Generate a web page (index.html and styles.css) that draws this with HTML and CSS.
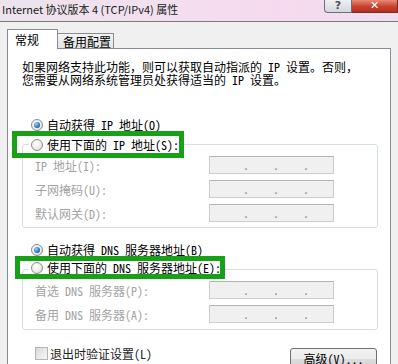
FILE: index.html
```html
<!DOCTYPE html>
<html lang="zh-CN">
<head>
<meta charset="utf-8">
<title>Internet 协议版本 4 (TCP/IPv4) 属性</title>
<link rel="stylesheet" href="styles.css">
</head>
<body>
<div class="titlebar">
  <span class="title">Internet 协议版本 4 (TCP/IPv4) 属性</span>
  <div class="caption">
    <span class="cap cap-help">?</span>
    <span class="cap cap-close">✕</span>
  </div>
</div>
<div class="window">
  <div class="tabs">
    <div class="tab tab-active">常规</div>
    <div class="tab tab-inactive">备用配置</div>
  </div>
  <div class="panel">
    <p class="desc">如果网络支持此功能，则可以获取自动指派的 IP 设置。否则，<br>您需要从网络系统管理员处获得适当的 IP 设置。</p>

    <div class="radio-row r-auto-ip"><span class="radio checked"></span><span class="rtext">自动获得 IP 地址(O)</span></div>
    <div class="radio-row head r-manual-ip"><span class="radio"></span><span class="rtext">使用下面的 IP 地址(S):</span><span class="mark mark-ip"></span></div>
    <div class="group g-ip">
      <div class="field"><span class="flabel">IP 地址(I):</span><span class="ipbox"><span>.</span><span>.</span><span>.</span></span></div>
      <div class="field"><span class="flabel">子网掩码(U):</span><span class="ipbox"><span>.</span><span>.</span><span>.</span></span></div>
      <div class="field"><span class="flabel">默认网关(D):</span><span class="ipbox"><span>.</span><span>.</span><span>.</span></span></div>
    </div>

    <div class="radio-row r-auto-dns"><span class="radio checked"></span><span class="rtext">自动获得 DNS 服务器地址(B)</span></div>
    <div class="radio-row head r-manual-dns"><span class="radio"></span><span class="rtext">使用下面的 DNS 服务器地址(E):</span><span class="mark mark-dns"></span></div>
    <div class="group g-dns">
      <div class="field"><span class="flabel">首选 DNS 服务器(P):</span><span class="ipbox"><span>.</span><span>.</span><span>.</span></span></div>
      <div class="field"><span class="flabel">备用 DNS 服务器(A):</span><span class="ipbox"><span>.</span><span>.</span><span>.</span></span></div>
    </div>

    <div class="bottom">
      <span class="check"></span><span class="ctext">退出时验证设置(L)</span>
      <span class="btn">高级(V)...</span>
    </div>
  </div>
</div>
</body>
</html>
```

FILE: styles.css
```css
html, body {
  margin: 0;
  padding: 0;
}
body {
  width: 398px;
  height: 364px;
  overflow: hidden;
  background: #f0f0f0;
  font-family: "Noto Sans Mono CJK SC", "Noto Sans CJK SC", sans-serif;
  font-size: 12px;
  color: #000;
}

/* title bar */
.titlebar {
  height: 21px;
  border-bottom: 1px solid #7a7a7a;
  background: linear-gradient(to right, #ece4ec 0%, #f2e0ef 40%, #f6d9ee 70%, #efdfee 100%);
  display: flex;
  align-items: flex-start;
}
.title {
  font-family: "Noto Sans CJK SC", sans-serif;
  font-size: 11px;
  line-height: 18px;
  padding-left: 2px;
  color: #1a1a1a;
}
.caption {
  margin-left: auto;
  display: flex;
}
.cap {
  box-sizing: border-box;
  height: 13px;
  display: flex;
  align-items: flex-end;
  justify-content: center;
  overflow: hidden;
  font-family: "DejaVu Sans", sans-serif;
  font-weight: bold;
  line-height: 12px;
}
.cap-help {
  width: 28px;
  border: 1px solid #6d6f76;
  border-top: none;
  border-radius: 0 0 0 4px;
  background: linear-gradient(#eef0f3, #d3d6dc);
  color: #4a5060;
  font-size: 11px;
}
.cap-close {
  width: 46px;
  border: 1px solid #7a2a22;
  border-top: none;
  border-left: none;
  background: linear-gradient(#e48a78, #c8412d 55%, #b3301f);
  color: #fff;
  font-size: 11px;
}

/* window body */
.window {
  padding: 7px 7px 0 7px;
}
.tabs {
  display: flex;
  align-items: flex-end;
  height: 20px;
}
.tab {
  box-sizing: border-box;
  border: 1px solid #898c95;
  border-bottom: none;
  font-family: "Noto Sans CJK SC", sans-serif;
  font-size: 12px;
}
.tab-active {
  width: 51px;
  height: 20px;
  background: #fff;
  position: relative;
  z-index: 2;
  padding-left: 7px;
  line-height: 20px;
}
.tab-inactive {
  width: 57px;
  height: 15px;
  margin-bottom: 1px;
  margin-left: -1px;
  padding-left: 5px;
  line-height: 15px;
  background: linear-gradient(#f3f3f3, #e4e4e4);
}
.panel {
  position: relative;
  z-index: 1;
  margin-top: -1px;
  height: 330px;
  background: #fff;
  border: 1px solid #898c95;
}

.desc {
  margin: 11px 0 0 14px;
  line-height: 13px;
}

/* radios */
.radio-row {
  display: flex;
  align-items: center;
  height: 16px;
  width: max-content;
  margin-left: 21px;
  padding: 0 2px;
  position: relative;
}
.head {
  background: #fff;
  z-index: 1;
}
.r-auto-ip { margin-top: 31px; }
.r-manual-ip { margin-top: 4px; }
.r-auto-dns { margin-top: 14px; }
.r-manual-dns { margin-top: 2px; }

.radio {
  flex: none;
  box-sizing: border-box;
  width: 12px;
  height: 12px;
  margin-right: 4px;
  border-radius: 50%;
  border: 1px solid #8a8c8e;
  background: radial-gradient(circle at 40% 35%, #ffffff 0%, #ececec 55%, #cdcdcd 100%);
  display: flex;
  align-items: center;
  justify-content: center;
}
.radio.checked::after {
  content: "";
  width: 6px;
  height: 6px;
  border-radius: 50%;
  background: radial-gradient(circle at 35% 35%, #9ad8ff 0%, #2d79c0 55%, #133e6c 100%);
}
.rtext {
  line-height: 16px;
}

/* green annotation boxes */
.mark {
  position: absolute;
  box-sizing: border-box;
  border: 5px solid #18a018;
  pointer-events: none;
}
.mark-ip {
  left: -17px;
  top: -6px;
  width: 172px;
  height: 27px;
}
.mark-dns {
  left: -14px;
  top: -4px;
  width: 210px;
  height: 23px;
}

/* group boxes */
.group {
  margin: 0 12px 0 14px;
  border: 1px solid #d5dfe5;
  border-radius: 3px;
  padding: 11px 0 5px 12px;
  display: flex;
  flex-direction: column;
  gap: 6px;
}
.g-ip { margin-top: -9px; }
.g-dns { margin-top: -7px; padding-bottom: 6px; }
.field {
  display: flex;
  align-items: center;
  height: 18px;
}
.flabel {
  width: 174px;
  color: #a3a3a3;
}
.ipbox {
  box-sizing: border-box;
  width: 125px;
  height: 18px;
  border: 1px solid #cdcdcd;
  border-top-color: #b3b3b3;
  background: #f0f0f0;
  display: flex;
  padding-left: 33px;
  color: #8c8c8c;
  line-height: 15px;
}
.ipbox span {
  width: 31.5px;
}

/* bottom row */
.bottom {
  display: flex;
  align-items: flex-start;
  margin: 17px 13px 0 27px;
}
.check {
  flex: none;
  box-sizing: border-box;
  width: 13px;
  height: 13px;
  margin-right: 2px;
  border: 1px solid #b4b4b4;
  background: linear-gradient(135deg, #d9d9d9, #f7f7f7);
}
.ctext {
  line-height: 13px;
  color: #222;
}
.btn {
  margin-left: auto;
  margin-top: 1px;
  box-sizing: border-box;
  width: 87px;
  height: 23px;
  border: 1px solid #707070;
  border-radius: 3px;
  background: linear-gradient(#f2f2f2 0%, #ebebeb 50%, #dddddd 50%, #cfcfcf 100%);
  text-align: center;
  line-height: 20px;
}
```
